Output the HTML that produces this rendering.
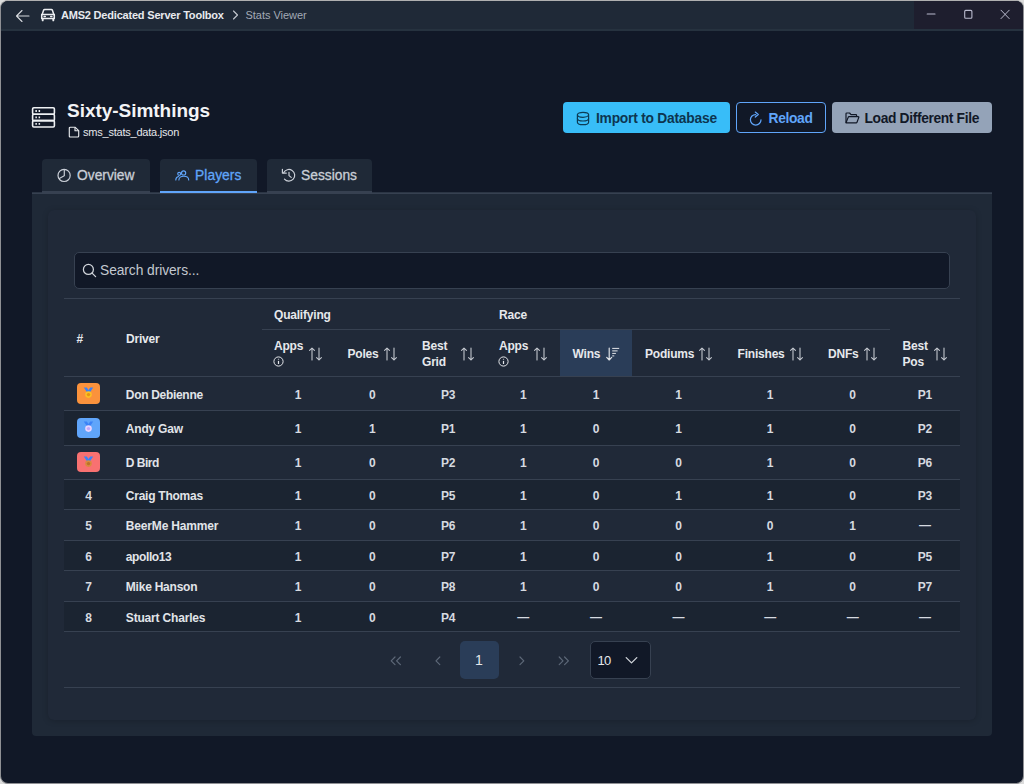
<!DOCTYPE html>
<html>
<head>
<meta charset="utf-8">
<title>Stats Viewer</title>
<style>
*{box-sizing:border-box;margin:0;padding:0}
html,body{width:1024px;height:784px;overflow:hidden;background:#dcdcdc;font-family:"Liberation Sans",sans-serif;}
.abs{position:absolute}
#win{position:absolute;left:0;top:0;width:1024px;height:784px;background:#111827;border:1px solid #8f9094;border-top-color:#b0b0b0;border-radius:8px;overflow:hidden}
#tbar{position:absolute;left:0;top:0;width:1022px;height:30px;background:#1f2937;border-bottom:2px solid #26323f}
#wctl{position:absolute;left:913px;top:0;width:110px;height:28px;background:#1e1e2e}
.t{position:absolute;white-space:nowrap;line-height:1}
#t1,#t2,#t3{-webkit-text-stroke:0.3px}
#outer{position:absolute;left:31px;top:192px;width:960px;height:543px;background:#1f2937;border-top:1px solid #374151;border-radius:0 0 4px 4px}
#card{position:absolute;left:47px;top:209px;width:928px;height:510px;background:#202938;border-radius:6px;box-shadow:0 1px 6px rgba(0,0,0,.18)}
.tab{position:absolute;top:158px;height:34px;background:#1f2937;border-radius:4px 4px 0 0;border-bottom:2px solid #374151}
.tab.act{border-bottom:2px solid #60a5fa}
.btn{position:absolute;top:101px;height:31px;border-radius:4px}
#search{position:absolute;left:73px;top:251px;width:876px;height:37px;background:#111827;border:1px solid #374151;border-radius:5px}
table{position:absolute;left:63px;top:297px;width:896px;border-collapse:collapse;table-layout:fixed;color:#e5e7eb;font-size:12px;font-weight:bold;border-top:1px solid #374151;letter-spacing:-0.2px}
th{text-align:left;font-weight:bold;vertical-align:middle;padding:0 0 0 12px;color:#eceef2}
thead tr.g1{height:31px}
thead tr.g2{height:47px}
thead{border-bottom:1px solid #374151}
th.grp{border-bottom:1px solid #374151;padding-top:2px}
th.hl{background:#2a3d58}
.hd{font-size:12px;font-weight:bold;color:#e6e8ec;letter-spacing:-0.2px}
.hc{display:flex;align-items:center;line-height:16.5px}
.hc .si{margin-left:7px;flex:none}
.hc.two .si{margin-left:7px}
.hc span{display:block}
.info{display:block;margin-top:3px}
td{text-align:center;padding:2px 0 0 0;vertical-align:middle;font-weight:bold;color:#d6dae0}
tbody tr{border-bottom:1px solid #374151}
tbody tr.r1{height:34.3px}
tbody tr.r2{height:30.5px}
tbody tr:nth-child(even){background:#1b2431}
td.dn{text-align:left;color:#e1e4e9;padding-left:12.3px}
td.c0{padding:0 0 0 13px;text-align:left}
.md{width:23px;height:20.5px;border-radius:4px;display:flex;align-items:center;justify-content:center}
.ds{position:relative;top:-1px}
.nm{width:23px;text-align:center;padding-top:2px}
</style>
</head>
<body>
<div id="win">
  <div id="tbar"></div>
  <div id="wctl"></div>
  <!-- titlebar icons -->
  <svg class="abs" style="left:14px;top:7.5px" width="16" height="14" viewBox="0 0 16 14" fill="none" stroke="#d6d9de" stroke-width="1.1" stroke-linecap="round" stroke-linejoin="round"><path d="M14 7H1.5M7 1.5L1.5 7L7 12.5"/></svg>
  <svg class="abs" id="car" style="left:39.3px;top:7.2px" width="16" height="14" viewBox="0 0 16 14" fill="none" stroke="#eceef1" stroke-width="1.5" stroke-linejoin="round" stroke-linecap="round"><path d="M2.2 6.4L3.5 2.4Q3.8 1.5 4.7 1.5H11.3Q12.2 1.5 12.5 2.4L13.8 6.4"/><path d="M1.7 6.4H14.3V10.6H1.7Z"/><path d="M2.7 10.8V12.4M13.3 10.8V12.4" stroke-width="1.9"/><path d="M4.1 8.5H5.3M10.7 8.5H11.9" stroke-width="1.5"/></svg>
  <div class="t" id="apptitle" style="left:60px;top:9px;font-size:11px;font-weight:bold;color:#e8eaee;letter-spacing:-0.2px">AMS2 Dedicated Server Toolbox</div>
  <svg class="abs" style="left:231px;top:9px" width="7" height="10" viewBox="0 0 7 10" fill="none" stroke="#c6cad1" stroke-width="1.1" stroke-linecap="round" stroke-linejoin="round"><path d="M1.5 1L5.5 5L1.5 9"/></svg>
  <div class="t" id="crumb" style="left:244.5px;top:9px;font-size:11px;color:#a3aab6;letter-spacing:-0.03px">Stats Viewer</div>
  <!-- window controls -->
  <svg class="abs" style="left:913px;top:0" width="110" height="28" viewBox="0 0 110 28" fill="none" stroke="#b9bacd" stroke-width="1.1" stroke-linecap="round" stroke-linejoin="round"><path d="M13.2 13H21"/><rect x="50.7" y="9.4" width="7.2" height="7.8" rx="1"/><path d="M87 9.2L95.2 17.6M95.2 9.2L87 17.6" stroke-width="1"/></svg>

  <!-- header -->
  <svg class="abs" id="srv" style="left:30px;top:105px" width="25" height="23" viewBox="0 0 25 23" fill="none" stroke="#eef0f3" stroke-width="1.6" stroke-linejoin="round"><rect x="1.6" y="1.8" width="21.8" height="6.4" rx="1.2"/><rect x="1.6" y="8.2" width="21.8" height="6.4" rx="1.2"/><rect x="1.6" y="14.6" width="21.8" height="6.4" rx="1.2"/><path d="M4.4 5H5.9M7.6 5H9.1M4.4 11.4H5.9M7.6 11.4H9.1M4.4 17.8H5.9M7.6 17.8H9.1" stroke-width="1.8"/></svg>
  <div class="t" id="h1" style="left:66px;top:99.5px;font-size:19px;letter-spacing:-0.03px;font-weight:bold;color:#f3f4f6">Sixty-Simthings</div>
  <svg class="abs" style="left:67px;top:124.5px" width="12" height="12" viewBox="0 0 12 12" fill="none" stroke="#e5e7eb" stroke-width="1.15" stroke-linejoin="round"><path d="M1.3 2.2Q1.3 1.2 2.3 1.2H7L10.7 4.7V10Q10.7 11 9.7 11H2.3Q1.3 11 1.3 10Z"/><path d="M7 1.2V4.7H10.7"/></svg>
  <div class="t" id="sub" style="left:82px;top:126px;font-size:11px;color:#e5e7eb;letter-spacing:-0.22px">sms_stats_data.json</div>

  <div class="btn" style="left:562px;width:167px;background:#38bdf8"></div>
  <svg class="abs" style="left:575px;top:109.5px" width="14" height="15" viewBox="0 0 14 15" fill="none" stroke="#0d3b54" stroke-width="1.2"><ellipse cx="7" cy="3.8" rx="5.6" ry="2.5"/><path d="M1.4 3.8V11.2C1.4 12.6 3.9 13.7 7 13.7S12.6 12.6 12.6 11.2V3.8"/><path d="M1.4 7.5C1.4 8.9 3.9 10 7 10S12.6 8.9 12.6 7.5"/></svg>
  <div class="t" id="b1" style="left:595px;top:111px;font-size:13.8px;font-weight:bold;color:#0d3550;letter-spacing:-0.23px">Import to Database</div>

  <div class="btn" style="left:735px;width:90px;border:1px solid #60a5fa"></div>
  <svg class="abs" style="left:747.3px;top:110px" width="15" height="15" viewBox="0 0 15 15" fill="none" stroke="#60a5fa" stroke-width="1.25" stroke-linecap="round" stroke-linejoin="round"><path d="M7.7 3.5A5.3 5.3 0 1 0 13 8.8"/><path d="M7.3 1.1L10.3 3.6L7.3 6.1"/></svg>
  <div class="t" id="b2" style="left:767.5px;top:111px;font-size:13.8px;font-weight:bold;color:#60a5fa;letter-spacing:-0.33px">Reload</div>

  <div class="btn" style="left:831px;width:160px;background:#94a3b8"></div>
  <svg class="abs" style="left:844px;top:111px" width="15" height="12" viewBox="0 0 15 12" fill="none" stroke="#111827" stroke-width="1.2" stroke-linejoin="round"><path d="M1 10.8V1.8Q1 1 1.8 1H4.6L6 2.6H10.8Q11.6 2.6 11.6 3.4V4.6"/><path d="M1 10.8L3.2 5.2Q3.4 4.6 4.1 4.6H13.2Q14.1 4.6 13.8 5.4L12 10.2Q11.8 10.8 11.1 10.8Z"/></svg>
  <div class="t" id="b3" style="left:863.5px;top:111px;font-size:13.8px;font-weight:bold;color:#111827;letter-spacing:-0.35px">Load Different File</div>

  <!-- tabs -->
  <div class="abs" style="left:31px;top:191px;width:960px;height:1px;background:#2b3544"></div>
  <div class="tab" style="left:41px;width:108px"></div>
  <div class="tab act" style="left:159px;width:97px"></div>
  <div class="tab" style="left:266px;width:105px"></div>
  <svg class="abs" style="left:56px;top:167px" width="15" height="15" viewBox="0 0 15 15" fill="none" stroke="#c9ced6" stroke-width="1.2" stroke-linecap="round"><circle cx="7.1" cy="7.4" r="6.1"/><path d="M7.3 1.5V7.7L2.3 10.6"/></svg>
  <div class="t" id="t1" style="left:76px;top:168px;font-size:13.8px;color:#c9ced6;letter-spacing:0px">Overview</div>
  <svg class="abs" style="left:174px;top:169px" width="15" height="12" viewBox="0 0 15 12" fill="none" stroke="#60a5fa" stroke-width="1.15" stroke-linecap="round"><circle cx="8.6" cy="2.9" r="2.1"/><path d="M3.9 9.9C3.9 7.4 5.8 6.2 8.8 6.2S13.7 7.4 13.7 9.9"/><circle cx="4.2" cy="3.8" r="1.5"/><path d="M0.8 9.9C0.8 8 1.9 6.8 3.6 6.5"/></svg>
  <div class="t" id="t2" style="left:194px;top:168px;font-size:13.8px;color:#60a5fa;letter-spacing:0.07px">Players</div>
  <svg class="abs" style="left:280px;top:167px" width="16" height="15" viewBox="0 0 16 15" fill="none" stroke="#c9ced6" stroke-width="1.2" stroke-linecap="round" stroke-linejoin="round"><path d="M2.64 4.85A5.8 5.8 0 1 1 3.46 11.03"/><path d="M1.4 1.3V5.1H5.3"/><path d="M8 4.3V7.6L10.2 9.4"/></svg>
  <div class="t" id="t3" style="left:300px;top:168px;font-size:13.8px;color:#c9ced6;letter-spacing:0px">Sessions</div>
  <div id="outer"></div>
  <div id="card"></div>
  <div id="search"></div>
  <svg class="abs" style="left:81px;top:262.3px" width="15" height="15" viewBox="0 0 15 15" fill="none" stroke="#d1d5db" stroke-width="1.25" stroke-linecap="round"><circle cx="6.4" cy="6.4" r="5"/><path d="M10.1 10.1L13.6 13.6"/></svg>
  <div class="t" id="ph" style="left:99px;top:263px;font-size:13.8px;color:#c3c8d0;letter-spacing:-0.07px">Search drivers...</div>

  <svg width="0" height="0" style="position:absolute"><defs>
    <g id="sort" fill="none" stroke="#c9cdd4" stroke-width="1.05" stroke-linecap="round" stroke-linejoin="round"><path d="M3 13V1M0.6 3.4L3 1L5.4 3.4"/><path d="M10 1V13M7.6 10.6L10 13L12.4 10.6"/></g>
  </defs></svg>
  <table>
    <colgroup><col style="width:49.5px"><col style="width:148px"><col style="width:73px"><col style="width:75px"><col style="width:77px"><col style="width:73px"><col style="width:72.5px"><col style="width:92.5px"><col style="width:90.5px"><col style="width:74.5px"><col style="width:70px"></colgroup>
    <thead>
      <tr class="g1"><th rowspan="2"></th><th rowspan="2"></th><th colspan="3" class="grp"></th><th colspan="5" class="grp"></th><th></th></tr>
      <tr class="g2"><th></th><th></th><th></th><th></th><th class="hl"></th><th></th><th></th><th></th><th></th></tr>
    </thead>
    <tbody>
<tr class="r1"><td class="c0"><div class="md" style="background:#fb923c"><svg width="11" height="12" viewBox="0 0 11 12" style="margin-top:-1px"><path d="M0.8 0.6H3.8L5.5 3L7.2 0.6H10.2L7.2 5H3.8Z" fill="#3b82f6"/><circle cx="5.5" cy="7.6" r="3.3" fill="#fbbf24"/><circle cx="5.5" cy="7.6" r="1.7" fill="#d97706" opacity=".6"/></svg></div></td><td class="dn" style="letter-spacing:-0.31px">Don Debienne</td><td>1</td><td>0</td><td>P3</td><td>1</td><td>1</td><td>1</td><td>1</td><td>0</td><td>P1</td></tr>
<tr class="r1"><td class="c0"><div class="md" style="background:#60a5fa"><svg width="11" height="12" viewBox="0 0 11 12" style="margin-top:-1px"><path d="M0.8 0.6H3.8L5.5 3L7.2 0.6H10.2L7.2 5H3.8Z" fill="#3b82f6"/><circle cx="5.5" cy="7.6" r="3.3" fill="#e9d5ff"/><circle cx="5.5" cy="7.6" r="1.7" fill="#a78bfa" opacity=".6"/></svg></div></td><td class="dn" style="letter-spacing:-0.21px">Andy Gaw</td><td>1</td><td>1</td><td>P1</td><td>1</td><td>0</td><td>1</td><td>1</td><td>0</td><td>P2</td></tr>
<tr class="r1"><td class="c0"><div class="md" style="background:#f87171"><svg width="11" height="12" viewBox="0 0 11 12" style="margin-top:-1px"><path d="M0.8 0.6H3.8L5.5 3L7.2 0.6H10.2L7.2 5H3.8Z" fill="#3b82f6"/><circle cx="5.5" cy="7.6" r="3.3" fill="#d98a3d"/><circle cx="5.5" cy="7.6" r="1.7" fill="#a85d1c" opacity=".6"/></svg></div></td><td class="dn" style="letter-spacing:-0.5px">D Bird</td><td>1</td><td>0</td><td>P2</td><td>1</td><td>0</td><td>0</td><td>1</td><td>0</td><td>P6</td></tr>
<tr class="r2"><td class="c0"><div class="nm">4</div></td><td class="dn" style="letter-spacing:-0.25px">Craig Thomas</td><td>1</td><td>0</td><td>P5</td><td>1</td><td>0</td><td>1</td><td>1</td><td>0</td><td>P3</td></tr>
<tr class="r2"><td class="c0"><div class="nm">5</div></td><td class="dn" style="letter-spacing:-0.17px">BeerMe Hammer</td><td>1</td><td>0</td><td>P6</td><td>1</td><td>0</td><td>0</td><td>0</td><td>1</td><td><span class="ds">—</span></td></tr>
<tr class="r2"><td class="c0"><div class="nm">6</div></td><td class="dn" style="letter-spacing:-0.4px">apollo13</td><td>1</td><td>0</td><td>P7</td><td>1</td><td>0</td><td>0</td><td>1</td><td>0</td><td>P5</td></tr>
<tr class="r2"><td class="c0"><div class="nm">7</div></td><td class="dn" style="letter-spacing:-0.23px">Mike Hanson</td><td>1</td><td>0</td><td>P8</td><td>1</td><td>0</td><td>0</td><td>1</td><td>0</td><td>P7</td></tr>
<tr class="r2"><td class="c0"><div class="nm">8</div></td><td class="dn" style="letter-spacing:-0.18px">Stuart Charles</td><td>1</td><td>0</td><td>P4</td><td><span class="ds">—</span></td><td><span class="ds">—</span></td><td><span class="ds">—</span></td><td><span class="ds">—</span></td><td><span class="ds">—</span></td><td><span class="ds">—</span></td></tr>
    </tbody>
  </table>

  <!-- header labels -->
<div class="t hd" style="left:75.5px;top:332.3px;">#</div>
<div class="t hd" style="left:125.0px;top:332.3px;">Driver</div>
<div class="t hd" style="left:273.0px;top:308.3px;">Qualifying</div>
<div class="t hd" style="left:498.0px;top:308.3px;">Race</div>
<div class="t hd" style="left:273.0px;top:338.8px;">Apps</div>
<svg class="abs" style="left:272.1px;top:355.0px" width="11" height="11" viewBox="0 0 11 11" fill="none" stroke="#e5e7eb" stroke-width="1"><circle cx="5.5" cy="5.5" r="4.6"/><path d="M5.5 4.9V8" stroke-width="1.2"/><path d="M5.5 2.8V3.6" stroke-width="1.2"/></svg>
<svg class="abs" style="left:307.5px;top:346px" width="13" height="14" viewBox="0 0 13 14"><use href="#sort"/></svg>
<div class="t hd" style="left:346.5px;top:347.3px;">Poles</div>
<svg class="abs" style="left:383.0px;top:346px" width="13" height="14" viewBox="0 0 13 14"><use href="#sort"/></svg>
<div class="t hd" style="left:421.0px;top:338.8px;">Best</div>
<div class="t hd" style="left:421.0px;top:355.3px;">Grid</div>
<svg class="abs" style="left:459.5px;top:346px" width="13" height="14" viewBox="0 0 13 14"><use href="#sort"/></svg>
<div class="t hd" style="left:498.0px;top:338.8px;">Apps</div>
<svg class="abs" style="left:497.1px;top:355.0px" width="11" height="11" viewBox="0 0 11 11" fill="none" stroke="#e5e7eb" stroke-width="1"><circle cx="5.5" cy="5.5" r="4.6"/><path d="M5.5 4.9V8" stroke-width="1.2"/><path d="M5.5 2.8V3.6" stroke-width="1.2"/></svg>
<svg class="abs" style="left:532.5px;top:346px" width="13" height="14" viewBox="0 0 13 14"><use href="#sort"/></svg>
<div class="t hd" style="left:571.5px;top:347.3px;">Wins</div>
<svg class="abs" style="left:604.6px;top:346.3px" width="14" height="14" viewBox="0 0 14 14" fill="none" stroke="#e3e6ea" stroke-width="1.15" stroke-linecap="round" stroke-linejoin="round"><path d="M3.2 1V13M0.7 10.3L3.2 13L5.7 10.3"/><path d="M6.6 1.4H12.8M6.6 3.9H11.2M6.6 6.4H9.5M6.6 8.9H7.9" stroke-width="1"/></svg>
<div class="t hd" style="left:644.0px;top:347.3px;">Podiums</div>
<svg class="abs" style="left:697.5px;top:346px" width="13" height="14" viewBox="0 0 13 14"><use href="#sort"/></svg>
<div class="t hd" style="left:736.5px;top:347.3px;">Finishes</div>
<svg class="abs" style="left:788.5px;top:346px" width="13" height="14" viewBox="0 0 13 14"><use href="#sort"/></svg>
<div class="t hd" style="left:827.0px;top:347.3px;">DNFs</div>
<svg class="abs" style="left:862.5px;top:346px" width="13" height="14" viewBox="0 0 13 14"><use href="#sort"/></svg>
<div class="t hd" style="left:901.5px;top:338.8px;">Best</div>
<div class="t hd" style="left:901.5px;top:355.3px;">Pos</div>
<svg class="abs" style="left:932.5px;top:346px" width="13" height="14" viewBox="0 0 13 14"><use href="#sort"/></svg>

  <!-- paginator -->
  <div class="abs" style="left:63px;top:686px;width:896px;height:1px;background:#374151"></div>
  <svg class="abs" style="left:388.5px;top:654.5px" width="12" height="10" viewBox="0 0 12 10" fill="none" stroke="#5d6878" stroke-width="1.2" stroke-linecap="round" stroke-linejoin="round"><path d="M5 1L1.2 4.8L5 8.6M10.4 1L6.6 4.8L10.4 8.6"/></svg>
  <svg class="abs" style="left:433.5px;top:654.5px" width="6" height="10" viewBox="0 0 6 10" fill="none" stroke="#5d6878" stroke-width="1.2" stroke-linecap="round" stroke-linejoin="round"><path d="M4.8 1L1 4.8L4.8 8.6"/></svg>
  <div class="abs" style="left:459px;top:640px;width:38.5px;height:38px;background:#2a3d58;border-radius:5px"></div>
  <div class="t" style="left:459px;top:652.3px;width:38px;text-align:center;font-size:14px;color:#e5e7eb">1</div>
  <svg class="abs" style="left:517.5px;top:654.5px" width="6" height="10" viewBox="0 0 6 10" fill="none" stroke="#5d6878" stroke-width="1.2" stroke-linecap="round" stroke-linejoin="round"><path d="M1 1L4.8 4.8L1 8.6"/></svg>
  <svg class="abs" style="left:556.5px;top:654.5px" width="12" height="10" viewBox="0 0 12 10" fill="none" stroke="#5d6878" stroke-width="1.2" stroke-linecap="round" stroke-linejoin="round"><path d="M1.2 1L5 4.8L1.2 8.6M6.6 1L10.4 4.8L6.6 8.6"/></svg>
  <div class="abs" style="left:589px;top:640px;width:61px;height:38px;background:#111827;border:1px solid #374151;border-radius:5px"></div>
  <div class="t" style="left:596.5px;top:652.8px;font-size:13px;color:#e5e7eb;letter-spacing:-0.7px">10</div>
  <svg class="abs" style="left:623.5px;top:654.5px" width="13" height="9" viewBox="0 0 13 9" fill="none" stroke="#d1d5db" stroke-width="1.3" stroke-linecap="round" stroke-linejoin="round"><path d="M1.2 1.6L6.5 6.9L11.8 1.6"/></svg>
</div>
</body>
</html>
